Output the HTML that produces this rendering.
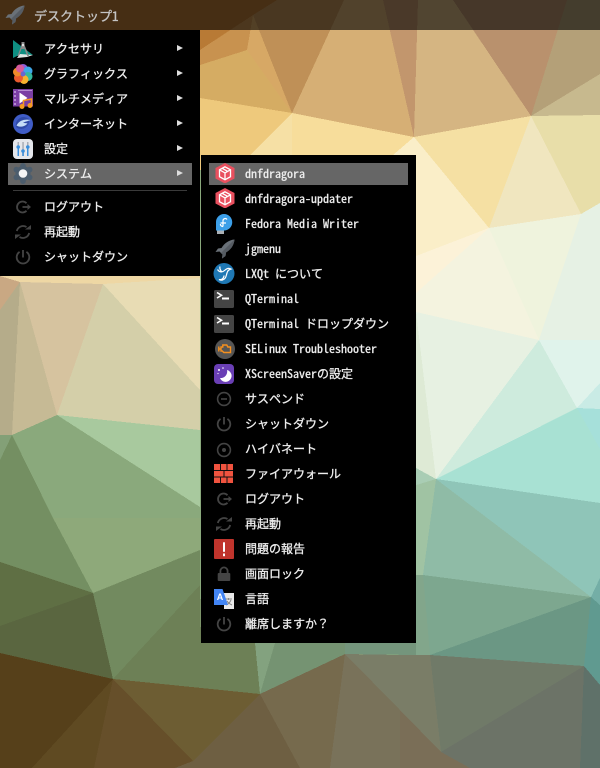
<!DOCTYPE html>
<html lang="ja"><head><meta charset="utf-8"><title>jgmenu</title>
<style>
html,body{margin:0;padding:0;width:600px;height:768px;overflow:hidden;background:#999}
#bg{position:absolute;left:0;top:0}
.bar{position:absolute;left:0;top:0;width:600px;height:30px;background:rgba(0,0,0,.62)}
.m{position:absolute;background:#000}
.hl{position:absolute;background:#666;height:22px}
.t{position:absolute;height:20px;line-height:20px;font-size:12px;color:#eee;white-space:pre;font-family:"Noto Sans Mono CJK JP","Liberation Mono","Noto Sans CJK JP",monospace;-webkit-text-stroke:.3px #eee}
.i{position:absolute;width:20px;height:20px;overflow:visible}
.a{position:absolute;width:0;height:0;border-left:6px solid #ddd;border-top:3px solid transparent;border-bottom:3px solid transparent}
.s{position:absolute;left:13px;top:190px;width:174px;height:1px;background:#3a3a3a}
</style></head><body>
<svg id="bg" width="600" height="768" viewBox="0 0 600 768" shape-rendering="crispEdges">
<rect width="600" height="768" fill="#8aa97c"/>
<polygon fill="#b87a35" points="0,0 277,0 253,15 200,50 200,65 0,120"/>
<polygon fill="#c8924f" points="200,50 253,15 247,50 200,65"/>
<polygon fill="#d5ac63" points="200,65 247,50 292,113 200,98"/>
<polygon fill="#d7a865" points="253,15 247,50 292,113"/>
<polygon fill="#bf9057" points="253,15 277,0 344,0 292,113"/>
<polygon fill="#d6af75" points="344,0 383,0 414,137 292,113"/>
<polygon fill="#c2966d" points="383,0 418,0 414,137"/>
<polygon fill="#d5b582" points="418,0 453,0 531,116 414,137"/>
<polygon fill="#b9916d" points="453,0 567,0 531,116"/>
<polygon fill="#b4a078" points="567,0 600,0 600,74 531,116"/>
<polygon fill="#c7b98e" points="600,74 600,115 531,116"/>
<polygon fill="#e8dea9" points="531,116 600,115 600,203 581,214"/>
<polygon fill="#f0e6bf" points="531,116 581,214 489,228"/>
<polygon fill="#f5e0a3" points="414,137 531,116 489,228"/>
<polygon fill="#faeec8" points="414,137 489,228 416,256 393,155"/>
<polygon fill="#f7dd9b" points="292,113 414,137 393,155 292,170"/>
<polygon fill="#eec97c" points="200,98 292,113 250,155 200,170"/>
<polygon fill="#f6e0a5" points="292,113 250,155 292,170"/>
<polygon fill="#fcf2d8" points="416,256 489,228 416,293"/>
<polygon fill="#f4f3df" points="416,293 489,228 539,340 416,312"/>
<polygon fill="#eff3dd" points="489,228 581,214 539,340"/>
<polygon fill="#e6f1e4" points="581,214 600,203 600,340 539,340"/>
<polygon fill="#e7f1e2" points="416,312 539,340 436,479"/>
<polygon fill="#deead5" points="416,312 436,479 416,468"/>
<polygon fill="#ceebdd" points="539,340 577,408 436,479"/>
<polygon fill="#e0f3eb" points="539,340 600,340 600,383 577,408"/>
<polygon fill="#c9ebe5" points="600,383 577,408 600,409"/>
<polygon fill="#a8e1d3" points="577,408 600,449 600,503 436,479"/>
<polygon fill="#a6e0da" points="577,408 600,409 600,449"/>
<polygon fill="#a9cdb4" points="416,468 436,479 416,487"/>
<polygon fill="#8fc5b8" points="436,479 600,503 600,578 591,597 463,500"/>
<polygon fill="#8fbba6" points="436,479 591,597 423,575"/>
<polygon fill="#a0c3a3" points="436,479 423,575 400,575 400,490"/>
<polygon fill="#7da78f" points="423,575 591,597 430,655"/>
<polygon fill="#6b9784" points="591,597 584,666 430,655"/>
<polygon fill="#74aea6" points="600,578 591,597 600,605"/>
<polygon fill="#609a90" points="591,597 600,605 600,685 584,666"/>
<polygon fill="#82a68b" points="400,575 423,575 430,655 400,655"/>
<polygon fill="#707a68" points="430,655 584,666 441,752"/>
<polygon fill="#6c7367" points="584,666 580,768 470,768 441,752"/>
<polygon fill="#5f7169" points="584,666 600,685 600,768 580,768"/>
<polygon fill="#7a7d67" points="345,654 400,655 430,655 441,752 400,710"/>
<polygon fill="#79725a" points="345,654 400,710 441,752 430,768 330,768"/>
<polygon fill="#7a6e57" points="400,710 441,752 470,768 400,768"/>
<polygon fill="#eed7a4" points="0,270 200,270 200,278 103,284 20,282 0,282"/>
<polygon fill="#c9a883" points="0,276 20,282 0,310"/>
<polygon fill="#b5ac8a" points="0,310 20,282 12,435 0,435"/>
<polygon fill="#c6ba95" points="20,282 57,415 12,435"/>
<polygon fill="#d6c39f" points="20,282 103,284 57,415"/>
<polygon fill="#d4cfa9" points="103,284 200,390 200,430 57,415"/>
<polygon fill="#e8dcb4" points="103,284 200,278 200,390"/>
<polygon fill="#a8c99e" points="57,415 200,430 200,507"/>
<polygon fill="#8aa97c" points="12,435 57,415 200,507 200,550 93,593 53,518"/>
<polygon fill="#8ea97a" points="53,518 200,518 200,550 93,593"/>
<polygon fill="#83a077" points="0,435 12,435 0,460"/>
<polygon fill="#748f62" points="0,460 12,435 53,518 93,593 0,562"/>
<polygon fill="#5f6f44" points="0,562 93,593 0,626"/>
<polygon fill="#5a6640" points="0,626 93,593 113,679 0,653"/>
<polygon fill="#728a5f" points="200,550 93,593 113,679 200,585"/>
<polygon fill="#6d8056" points="113,679 200,585 201,640 255,643 260,694"/>
<polygon fill="#83a27f" points="255,643 275,643 260,694"/>
<polygon fill="#759372" points="275,643 345,643 345,654 260,694"/>
<polygon fill="#74957c" points="345,643 416,643 416,655 345,654"/>
<polygon fill="#56401a" points="0,653 113,679 32,768 0,768"/>
<polygon fill="#5f4a22" points="113,679 94,768 32,768"/>
<polygon fill="#664f2a" points="113,679 193,761 175,768 94,768"/>
<polygon fill="#6d5d33" points="113,679 260,694 193,761"/>
<polygon fill="#6e5f42" points="260,694 300,768 175,768 193,761"/>
<polygon fill="#766a4d" points="260,694 345,654 330,768 300,768"/>
</svg>

<svg width="0" height="0" style="position:absolute">
<defs>
<symbol id="rocket" viewBox="0 0 20 20"><path fill="#6a7178" d="M19.5.5C14 1 9.5 4 6.500 9L3 9.500.5 13l4-.5 3 3L7 19.500l3.500-2.500.5-3.500c5-3 8-7.500 8.500-13z"/><path fill="#565c63" d="M19.500.5C19 6 16 10.500 11 13.500L10.500 17 7 19.500l.5-4L6 14z"/></symbol>
<symbol id="logout" viewBox="0 0 20 20"><path fill="none" stroke="#444" stroke-width="1.800" d="M13.500 6.200A5.500 5.500 0 1 0 13.500 13.800"/><path fill="#444" d="M9.500 9.100h5V7l3.500 3-3.500 3v-2.100h-5z"/></symbol>
<symbol id="reload" viewBox="0 0 20 20"><g fill="none" stroke="#444" stroke-width="1.800"><path d="M3.800 9A6.500 6.500 0 0 1 13.500 5"/><path d="M16.200 11A6.500 6.500 0 0 1 6.500 15"/></g><path fill="#444" d="M12 7.500h6V3zM8 12.500H2V17z"/></symbol>
<symbol id="power" viewBox="0 0 20 20"><path fill="none" stroke="#444" stroke-width="1.800" d="M6.600 4.900a6.300 6.300 0 1 0 6.800 0"/><rect x="9.100" y="3" width="1.800" height="7.500" fill="#444"/></symbol>
<symbol id="hex" viewBox="0 0 20 20"><path fill="#e9505f" d="M10 0l9.500 5v10.500L10 20.500.5 15.500V5z"/><g fill="none" stroke="#fff" stroke-width="1.300"><path d="M10 3.800l5.500 3v6.900L10 16.700l-5.500-3V6.800z"/><path d="M4.500 6.800L10 9.900l5.500-3.100M10 9.900v6.800M7.200 5.300l5.500 3.100"/></g></symbol>
<symbol id="term" viewBox="0 0 20 20"><rect y="1" width="20" height="18" rx="1.500" fill="#444"/><path fill="none" stroke="#fff" stroke-width="1.600" d="M3 3.500l4.500 2.800L3 9"/><rect x="8" y="8.500" width="7" height="2" fill="#fff"/></symbol>
</defs>
</svg>

<div class="bar"></div>
<svg class="i" style="left:5px;top:5px"><use href="#rocket"/></svg>
<div class="t" style="left:34px;top:6px;font-size:13px;color:#c4c4c4;-webkit-text-stroke:.3px #c4c4c4">デスクトップ1</div>

<div class="m" style="left:0;top:30px;width:200px;height:246px"></div>
<div class="hl" style="left:8px;top:163px;width:184px"></div>

<svg class="i" style="left:13px;top:38px" viewBox="0 0 20 20"><path fill="#0f8f82" d="M0 2l20 15H6L0 20z"/><path fill="#dfe6e4" d="M4 20l3-4 13 1-6 2z"/><path fill="#888" d="M8.500 4h3v3l4.500 11h-1.800l-2.700-7h-3l-2.700 7H4.500L8.500 7z"/><circle cx="10" cy="7" r="1.300" fill="#ddd"/></svg>
<svg class="i" style="left:13px;top:64px" viewBox="0 0 20 20"><circle cx="10" cy="5" r="5" fill="#8f5fd8"/><circle cx="15" cy="7" r="4.500" fill="#3fa7e8"/><circle cx="15" cy="12.500" r="4.500" fill="#35b89f"/><circle cx="11" cy="15.500" r="4.500" fill="#f7b22e"/><circle cx="5.500" cy="14" r="4.500" fill="#ea5a2e"/><circle cx="4.500" cy="8" r="4.500" fill="#f08a2a"/><circle cx="7" cy="4.500" r="4" fill="#d65a9c"/><circle cx="10" cy="10" r="2.500" fill="#6a66d0"/></svg>
<svg class="i" style="left:13px;top:89px" viewBox="0 0 20 20"><rect width="20" height="17.500" fill="#7b3fa4"/><g fill="#b48bd0"><rect x="1" y="2" width="2" height="2"/><rect x="1" y="6" width="2" height="2"/><rect x="1" y="10" width="2" height="2"/><rect x="1" y="14" width="2" height="2"/><rect x="5" y="1" width="14" height="1"/></g><path fill="#fff" d="M6.500 3.500l8 5.500-8 5.500z"/><path fill="none" stroke="#f59a20" stroke-width="1.500" d="M10.500 17V11.500l8-1.500V16"/><circle cx="9" cy="17.500" r="2.500" fill="#f59a20"/><circle cx="17" cy="16.500" r="2.500" fill="#f59a20"/></svg>
<svg class="i" style="left:13px;top:114px" viewBox="0 0 20 20"><circle cx="10" cy="10" r="10" fill="#3f5cc6"/><path fill="#2f4aa8" d="M3 13a8 8 0 0 1 13-8 8 8 0 0 1-13 8z"/><path fill="#c5dcf7" d="M3.500 11.500c3-5.500 8.500-6.500 14-5.500-2 1-5.500 1.500-7.500 3 1.500 0 3 0 4.500.5-3 3.500-8 4-11 2z"/></svg>
<svg class="i" style="left:13px;top:139px" viewBox="0 0 20 20"><rect width="20" height="20" rx="4" fill="#e4e6eb"/><g fill="#a8acb6"><rect x="4.500" y="3" width="1.500" height="14"/><rect x="9.300" y="3" width="1.500" height="14"/><rect x="14" y="3" width="1.500" height="14"/></g><g fill="#3b8fdc"><rect x="4.500" y="9" width="1.500" height="8"/><rect x="9.300" y="12" width="1.500" height="5"/><rect x="14" y="7" width="1.500" height="10"/><circle cx="5.200" cy="8" r="1.800"/><circle cx="10" cy="12" r="1.800"/><circle cx="14.800" cy="8" r="1.800"/></g></svg>
<svg class="i" style="left:13px;top:163px" viewBox="0 0 20 20"><g fill="#4c5d6d"><circle cx="10" cy="10.500" r="7.500"/><circle cx="10" cy="2.800" r="2.800"/><circle cx="10" cy="18.200" r="2.800"/><circle cx="3.300" cy="6.600" r="2.800"/><circle cx="16.700" cy="6.600" r="2.800"/><circle cx="3.300" cy="14.400" r="2.800"/><circle cx="16.700" cy="14.400" r="2.800"/></g><circle cx="10" cy="10.500" r="4.300" fill="#f3f4f5"/></svg>
<svg class="i" style="left:13px;top:197px"><use href="#logout"/></svg>
<svg class="i" style="left:13px;top:222px"><use href="#reload"/></svg>
<svg class="i" style="left:13px;top:247px"><use href="#power"/></svg>

<div class="t" style="left:44px;top:39px">アクセサリ</div>
<div class="t" style="left:44px;top:64px">グラフィックス</div>
<div class="t" style="left:44px;top:89px">マルチメディア</div>
<div class="t" style="left:44px;top:114px">インターネット</div>
<div class="t" style="left:44px;top:139px">設定</div>
<div class="t" style="left:44px;top:164px">システム</div>
<div class="t" style="left:44px;top:197px">ログアウト</div>
<div class="t" style="left:44px;top:222px">再起動</div>
<div class="t" style="left:44px;top:247px">シャットダウン</div>
<div class="a" style="left:177px;top:45px"></div>
<div class="a" style="left:177px;top:70px"></div>
<div class="a" style="left:177px;top:95px"></div>
<div class="a" style="left:177px;top:120px"></div>
<div class="a" style="left:177px;top:145px"></div>
<div class="a" style="left:177px;top:170px"></div>
<div class="s"></div>

<div class="m" style="left:201px;top:155px;width:215px;height:488px"></div>
<div class="hl" style="left:209px;top:163px;width:199px"></div>

<svg class="i" style="left:215px;top:163px"><use href="#hex"/></svg>
<svg class="i" style="left:215px;top:188px"><use href="#hex"/></svg>
<svg class="i" style="left:214px;top:213px" viewBox="0 0 20 20"><rect x="3" y="17" width="7" height="4" fill="#aab0b5"/><path fill="#3c9fe8" d="M10 1a8 8 0 0 1 0 16.500H2V9a8 8 0 0 1 8-8z"/><path fill="none" stroke="#fff" stroke-width="1.200" d="M9 13.500V7.500a2.200 2.200 0 0 1 4 -1M6.500 10h5.500M9 13.500a2.400 2.400 0 0 1-2.600-2.500"/></svg>
<svg class="i" style="left:215px;top:239px"><use href="#rocket"/></svg>
<svg class="i" style="left:214px;top:264px" viewBox="0 0 20 20"><circle cx="10" cy="9.500" r="10.500" fill="#1f78b4"/><path fill="none" stroke="#fff" stroke-width="1.200" d="M3.500 5.500c2 3 5 3 7 1 1.500-1.500 4-3 6.500-1.500-2 .5-3.500 2-4 4-1 3-1 6-4.500 7-2 .5-3.500-.5-3.500-.5 2.500.5 5-1 5-4M6 2.500c-.5 2 .5 4 2 5.500"/></svg>
<svg class="i" style="left:214px;top:289px"><use href="#term"/></svg>
<svg class="i" style="left:214px;top:314px"><use href="#term"/></svg>
<svg class="i" style="left:215px;top:339px" viewBox="0 0 20 20"><circle cx="10" cy="10" r="10" fill="#555"/><path fill="none" stroke="#f5901e" stroke-width="1.400" d="M6 8h1.800V6h4l1 2h2.700v5.500H8.800L7.300 12H6zM3.800 7.500v5M3.800 10H6"/></svg>
<svg class="i" style="left:214px;top:364px" viewBox="0 0 20 20"><rect width="20" height="20" rx="4" fill="#6a3fb5"/><path fill="#fff" d="M13 6a6 6 0 1 1-7 8 6.500 6.500 0 0 0 7-8z"/><circle cx="5" cy="6" r="1" fill="#fff"/><circle cx="9" cy="4" r=".8" fill="#fff"/><circle cx="4" cy="9.500" r=".6" fill="#fff"/></svg>
<svg class="i" style="left:214px;top:389px" viewBox="0 0 20 20"><circle cx="10" cy="10" r="6.400" fill="none" stroke="#444" stroke-width="1.600"/><rect x="7" y="9.200" width="6" height="1.600" fill="#444"/></svg>
<svg class="i" style="left:214px;top:414px"><use href="#power"/></svg>
<svg class="i" style="left:214px;top:440px" viewBox="0 0 20 20"><circle cx="10" cy="10" r="6.400" fill="none" stroke="#444" stroke-width="1.600"/><circle cx="10" cy="10" r="2" fill="#444"/></svg>
<svg class="i" style="left:214px;top:464px" viewBox="0 0 20 20"><rect width="19" height="19" fill="#f0533f"/><g fill="#111"><rect y="6" width="19" height="1"/><rect y="12.500" width="19" height="1"/><rect x="6" y="0" width="1" height="6"/><rect x="12.500" y="0" width="1" height="6"/><rect x="9.500" y="7" width="1" height="5.500"/><rect x="6" y="13.500" width="1" height="5.500"/><rect x="12.500" y="13.500" width="1" height="5.500"/></g></svg>
<svg class="i" style="left:214px;top:489px"><use href="#logout"/></svg>
<svg class="i" style="left:214px;top:514px"><use href="#reload"/></svg>
<svg class="i" style="left:214px;top:539px" viewBox="0 0 20 20"><rect width="20" height="20" rx="1" fill="#c0342c"/><rect x="9" y="3.300" width="2" height="9.500" fill="#fff"/><rect x="9" y="14.500" width="2" height="2.700" fill="#fff"/></svg>
<svg class="i" style="left:214px;top:564px" viewBox="0 0 20 20"><rect x="3.700" y="9" width="12.600" height="8" rx="1" fill="#444"/><path fill="none" stroke="#444" stroke-width="1.800" d="M6.400 9.500V7a3.600 3.600 0 0 1 7.200 0v2.500"/></svg>
<svg class="i" style="left:214px;top:589px" viewBox="0 0 20 20"><rect x="10" y="4" width="10" height="16" fill="#e8e8e8"/><path fill="none" stroke="#888" stroke-width="1" d="M11 10h7M14.500 9v2M12 16c3-1 4-3 5-5M13 12c1 2 3 3 5 4"/><path fill="#4285f4" d="M0 0h8.500l5.500 16H0z"/><text x="6" y="11" font-family="Liberation Sans, sans-serif" font-size="9" font-weight="bold" fill="#fff" text-anchor="middle">A</text></svg>
<svg class="i" style="left:214px;top:614px"><use href="#power"/></svg>

<div class="t" style="left:245px;top:164px">dnfdragora</div>
<div class="t" style="left:245px;top:189px">dnfdragora-updater</div>
<div class="t" style="left:245px;top:214px">Fedora Media Writer</div>
<div class="t" style="left:245px;top:239px">jgmenu</div>
<div class="t" style="left:245px;top:264px">LXQt について</div>
<div class="t" style="left:245px;top:289px">QTerminal</div>
<div class="t" style="left:245px;top:314px">QTerminal ドロップダウン</div>
<div class="t" style="left:245px;top:339px">SELinux Troubleshooter</div>
<div class="t" style="left:245px;top:364px">XScreenSaverの設定</div>
<div class="t" style="left:245px;top:389px">サスペンド</div>
<div class="t" style="left:245px;top:414px">シャットダウン</div>
<div class="t" style="left:245px;top:439px">ハイバネート</div>
<div class="t" style="left:245px;top:464px">ファイアウォール</div>
<div class="t" style="left:245px;top:489px">ログアウト</div>
<div class="t" style="left:245px;top:514px">再起動</div>
<div class="t" style="left:245px;top:539px">問題の報告</div>
<div class="t" style="left:245px;top:564px">画面ロック</div>
<div class="t" style="left:245px;top:589px">言語</div>
<div class="t" style="left:245px;top:614px">離席しますか？</div>
</body></html>
